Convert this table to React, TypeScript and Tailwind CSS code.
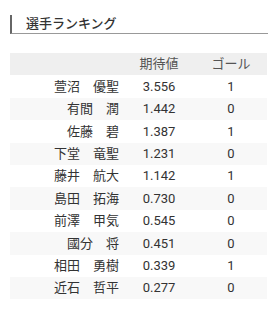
import React from 'react';

interface Player {
  name: string;
  xg: string;
  goals: number;
}

const players: Player[] = [
  { name: '萱沼　優聖', xg: '3.556', goals: 1 },
  { name: '有間　潤', xg: '1.442', goals: 0 },
  { name: '佐藤　碧', xg: '1.387', goals: 1 },
  { name: '下堂　竜聖', xg: '1.231', goals: 0 },
  { name: '藤井　航大', xg: '1.142', goals: 1 },
  { name: '島田　拓海', xg: '0.730', goals: 0 },
  { name: '前澤　甲気', xg: '0.545', goals: 0 },
  { name: '國分　将', xg: '0.451', goals: 0 },
  { name: '相田　勇樹', xg: '0.339', goals: 1 },
  { name: '近石　哲平', xg: '0.277', goals: 0 },
];

export default function App() {
  return (
    <div
      className="w-[280px] h-[322px] bg-white pl-[10px] pr-[12px] pt-[15px] text-[#333]"
      style={{ fontFamily: 'Roboto, "Noto Sans CJK JP", sans-serif' }}
    >
      <h2 className="h-[19px] border-l-2 border-b border-l-[#666] border-b-[#999] pl-[14px] text-[13px] font-medium leading-[17px]">
        選手ランキング
      </h2>

      <table className="mt-[19px] w-[257px] table-fixed border-collapse text-[13px]">
        <colgroup>
          <col className="w-[113px]" />
          <col className="w-[72px]" />
          <col className="w-[72px]" />
        </colgroup>
        <thead>
          <tr className="h-[22.4px] bg-[#efefef] text-[#555]">
            <th className="font-normal"></th>
            <th className="font-normal text-center">期待値</th>
            <th className="font-normal text-center">ゴール</th>
          </tr>
        </thead>
        <tbody>
          {players.map((p, i) => (
            <tr key={p.name} className={`h-[22.4px] ${i % 2 === 1 ? 'bg-[#f8f8f8]' : 'bg-white'}`}>
              <td className="pr-[4px] text-right">{p.name}</td>
              <td className="text-center">{p.xg}</td>
              <td className="text-center">{p.goals}</td>
            </tr>
          ))}
        </tbody>
      </table>
    </div>
  );
}
